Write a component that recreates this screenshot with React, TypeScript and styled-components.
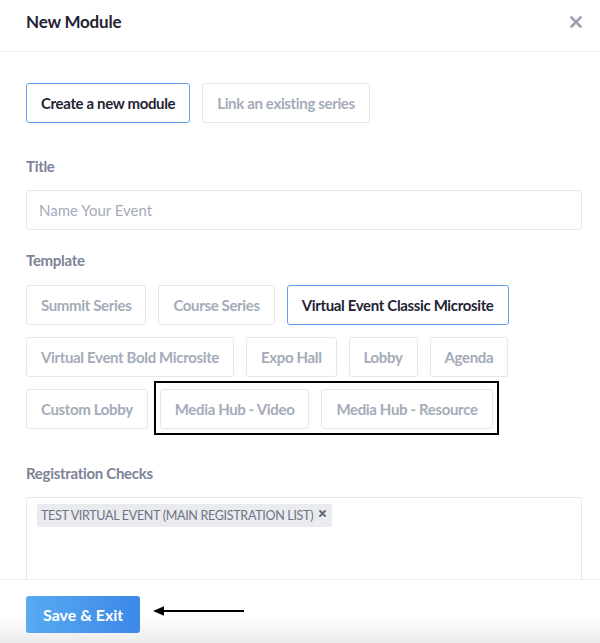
import React, { useState } from "react";
import styled, { createGlobalStyle } from "styled-components";

const templates = [
  "Summit Series",
  "Course Series",
  "Virtual Event Classic Microsite",
  "Virtual Event Bold Microsite",
  "Expo Hall",
  "Lobby",
  "Agenda",
  "Custom Lobby",
];

const highlighted = ["Media Hub - Video", "Media Hub - Resource"];

function App() {
  const [mode, setMode] = useState("new");
  const [template, setTemplate] = useState("Virtual Event Classic Microsite");

  return (
    <>
      <GlobalStyle />
      <Modal>
        <Header>
          <HeaderTitle>New Module</HeaderTitle>
          <CloseButton aria-label="Close">
            <svg width="12" height="12" viewBox="0 0 12 12">
              <path
                d="M1.5 1.5L10.5 10.5M10.5 1.5L1.5 10.5"
                stroke="#9aa1b0"
                strokeWidth="2.6"
                strokeLinecap="round"
              />
            </svg>
          </CloseButton>
        </Header>

        <Body>
          <ModeRow>
            <OptionButton $active={mode === "new"} onClick={() => setMode("new")}>
              Create a new module
            </OptionButton>
            <OptionButton $active={mode === "link"} onClick={() => setMode("link")}>
              Link an existing series
            </OptionButton>
          </ModeRow>

          <Field>
            <Label>Title</Label>
            <TextInput placeholder="Name Your Event" />
          </Field>

          <Field>
            <Label>Template</Label>
            <TemplateGrid>
              {templates.map((t) => (
                <OptionButton key={t} $active={template === t} onClick={() => setTemplate(t)}>
                  {t}
                </OptionButton>
              ))}
              <Highlight>
                {highlighted.map((t) => (
                  <OptionButton key={t} $active={template === t} onClick={() => setTemplate(t)}>
                    {t}
                  </OptionButton>
                ))}
              </Highlight>
            </TemplateGrid>
          </Field>

          <Field>
            <Label>Registration Checks</Label>
            <TagBox>
              <Tag>
                TEST VIRTUAL EVENT (MAIN REGISTRATION LIST)
                <svg width="7" height="7" viewBox="0 0 7 7">
                  <path
                    d="M1 1L6 6M6 1L1 6"
                    stroke="#5f6573"
                    strokeWidth="1.8"
                    strokeLinecap="round"
                  />
                </svg>
              </Tag>
            </TagBox>
          </Field>
        </Body>

        <Footer>
          <SaveButton>Save &amp; Exit</SaveButton>
          <svg width="92" height="12" viewBox="0 0 92 12">
            <path d="M8 6H91" stroke="#000" strokeWidth="2" />
            <path d="M0 6L11 1.2V10.8Z" fill="#000" />
          </svg>
        </Footer>
      </Modal>
    </>
  );
}

const GlobalStyle = createGlobalStyle`
  html, body {
    margin: 0;
    padding: 0;
    background: #fff;
  }
  body {
    font-family: Lato, "Liberation Sans", sans-serif;
    -webkit-font-smoothing: antialiased;
  }
  * {
    box-sizing: border-box;
  }
`;

const Modal = styled.div`
  display: flex;
  flex-direction: column;
  width: 600px;
  height: 643px;
  overflow: hidden;
  background: #fff;
`;

const Header = styled.div`
  display: flex;
  align-items: center;
  justify-content: space-between;
  flex: 0 0 auto;
  height: 52px;
  padding: 0 18px 8px 26px;
  border-bottom: 1px solid #eef0f3;
`;

const HeaderTitle = styled.h2`
  margin: 0;
  font-size: 17px;
  font-weight: 700;
  color: #1f2433;
  letter-spacing: -0.2px;
`;

const CloseButton = styled.button`
  display: flex;
  padding: 0;
  border: none;
  background: none;
  cursor: pointer;
`;

const Body = styled.div`
  flex: 1 1 auto;
  overflow: hidden;
  padding: 31px 18px 0 26px;
  display: flex;
  flex-direction: column;
  gap: 21px;
`;

const ModeRow = styled.div`
  display: flex;
  gap: 12px;
  margin-bottom: 13px;
`;

const OptionButton = styled.button<{ $active?: boolean }>`
  height: 40px;
  padding: 0 14px;
  background: #fff;
  border: 1px solid ${(p) => (p.$active ? "#5e9ff0" : "#e4e6ea")};
  border-radius: 3px;
  font-family: inherit;
  font-size: 15px;
  font-weight: 700;
  letter-spacing: -0.35px;
  color: ${(p) => (p.$active ? "#1f2433" : "#a4abb9")};
  cursor: pointer;
  white-space: nowrap;
`;

const Field = styled.div`
  display: flex;
  flex-direction: column;
  gap: 15px;
`;

const Label = styled.label`
  font-size: 15px;
  font-weight: 700;
  color: #7b8496;
  line-height: 18px;
  letter-spacing: -0.3px;
`;

const TextInput = styled.input`
  height: 40px;
  padding: 0 12px;
  border: 1px solid #e4e6ea;
  border-radius: 3px;
  font-family: inherit;
  font-size: 15px;
  color: #1f2433;
  outline: none;

  &::placeholder {
    color: #a4abb9;
    font-weight: 400;
  }
`;

const TemplateGrid = styled.div`
  display: flex;
  flex-wrap: wrap;
  gap: 12px;
  margin-top: 1px;
  margin-bottom: 14px;
`;

const Highlight = styled.div`
  position: relative;
  display: flex;
  gap: 12px;

  &::after {
    content: "";
    position: absolute;
    top: -8px;
    left: -6px;
    right: -6px;
    bottom: -6px;
    border: 2px solid #000;
    pointer-events: none;
  }
`;

const TagBox = styled.div`
  display: flex;
  align-items: flex-start;
  height: 110px;
  padding: 6px 10px;
  border: 1px solid #e4e6ea;
  border-radius: 3px;
`;

const Tag = styled.span`
  display: inline-flex;
  align-items: flex-start;
  gap: 6px;
  height: 23px;
  padding: 4px 6px 0 4px;
  background: #e9ebef;
  border-radius: 2px;
  font-size: 12.5px;
  color: #6e7483;
  letter-spacing: -0.3px;

  svg {
    margin-top: 2px;
  }
`;

const Footer = styled.div`
  flex: 0 0 auto;
  display: flex;
  align-items: flex-start;
  gap: 13px;
  height: 64px;
  padding: 16px 26px 0;
  border-top: 1px solid #eef0f3;
  background: linear-gradient(to bottom, #fff 55%, #ececec 100%);

  svg {
    margin-top: 9px;
  }
`;

const SaveButton = styled.button`
  height: 37px;
  padding: 0 17px;
  border: none;
  border-radius: 3px;
  background: linear-gradient(to right, #58aaf2, #3c88e7);
  color: #fff;
  font-family: inherit;
  font-size: 16px;
  font-weight: 700;
  cursor: pointer;
`;

export default App;
